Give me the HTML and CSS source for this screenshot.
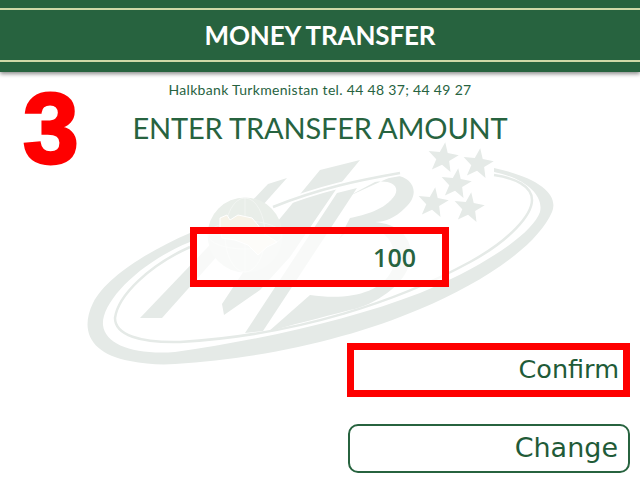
FILE: index.html
```html
<!DOCTYPE html>
<html lang="en">
<head>
<meta charset="utf-8">
<title>Money Transfer</title>
<link rel="stylesheet" href="styles.css">
</head>
<body>
<div class="screen">
  <svg class="watermark" width="640" height="480" viewBox="0 0 640 480" aria-hidden="true">
    <defs>
      <path id="star" d="M0-16L4-5.5L15.2-4.9L6.5 2.1L9.4 12.9L0 6.9L-9.4 12.9L-6.5 2.1L-15.2-4.9L-4-5.5Z"/>
    </defs>
    <g fill="#e5eae7">
      <path d="M190 233C150 250 106 277 93 303C79 332 92 354 130 361C145 364 160 365 175 364C260 359 350 339 420 309C480 284 537 247 552 212C559 195 540 178 494 168L494 172C525 178 544 195 540 212C532 235 480 268 420 293C350 320 260 340 175 352C135 355 105 345 103 325C101 302 140 262 190 242Z"/>
      <path d="M140 318L162 318L287 178L268 184Z"/>
      <path d="M222 304L224 315L260 290L290 257L337 188L360 160L320 170L273 227Z"/>
      <path d="M245 333L263 331L357 188L337 193Z"/>
      <path d="M347 197L395 175C415 178 420 195 405 208C395 218 385 222 375 222C400 224 415 240 410 262C405 285 375 305 350 310C320 318 290 325 268 332L310 295C345 300 380 295 392 270C400 245 385 228 365 228C350 228 340 235 336 245L350 218C365 215 385 210 395 195C400 185 390 180 375 182Z"/>
      <use href="#star" transform="translate(443 158) rotate(8)"/>
      <use href="#star" transform="translate(478 164) rotate(8)"/>
      <use href="#star" transform="translate(456 184) rotate(8)"/>
      <use href="#star" transform="translate(433 203) rotate(8)"/>
      <use href="#star" transform="translate(469 208) rotate(8)"/>
    </g>
    <path d="M190 247C150 265 118 295 115 318C115 335 140 343 180 342C300 335 400 300 470 262C510 240 532 215 532 200C532 186 515 178 494 175" fill="none" stroke="#e5eae7" stroke-width="2.5"/>
    <path d="M273 207C320 188 360 180 400 173" fill="none" stroke="#fff" stroke-width="6"/>
    <path d="M273 207C320 188 360 180 400 173" fill="none" stroke="#e5eae7" stroke-width="2.5"/>
    <circle cx="245" cy="235" r="37.5" fill="#e9eee9"/>
    <g class="globe-grid">
      <ellipse cx="245" cy="235" rx="20" ry="37"/>
      <ellipse cx="245" cy="235" rx="37" ry="14"/>
      <path d="M245 198V272M208 235H282"/>
    </g>
    <path d="M220 218L227 215L230 220L238 215L252 218L258 225L263 233L277 242L267 247L258 255L248 245L235 240L222 238L220 228Z" fill="#f7f3e8" stroke="#fff" stroke-width="1"/>
  </svg>
  <header class="banner">
    <h1 class="banner-title">MONEY TRANSFER</h1>
  </header>
  <main class="content">
    <div class="intro">
      <div class="step">3</div>
      <div class="headings">
        <p class="phone">Halkbank Turkmenistan tel. 44 48 37; 44 49 27</p>
        <h2 class="prompt">ENTER TRANSFER AMOUNT</h2>
      </div>
    </div>
    <div class="amount">100</div>
    <div class="actions">
      <button class="action action-active">Confirm</button>
      <button class="action action-plain">Change</button>
    </div>
  </main>
</div>
</body>
</html>
```
FILE: styles.css
```css
* { box-sizing: border-box; margin: 0; padding: 0; }
html, body { width: 640px; height: 480px; overflow: hidden; background: #fff; }
body { font-family: "Lato", "Liberation Sans", sans-serif; color: #27633f; }
.screen { position: relative; width: 640px; height: 480px; }
.watermark { position: absolute; left: 0; top: 0; }
.globe-grid { fill: none; stroke: #fff; stroke-width: .6; opacity: .7; }
.banner {
  position: relative;
  height: 72px;
  padding-top: 8px;
  background: #27633f;
  box-shadow: 0 2px 4px rgba(0, 0, 0, .45);
}
.banner-title {
  height: 54px;
  border-top: 2px solid #cfd9a8;
  border-bottom: 2px solid #cfd9a8;
  color: #fff;
  font-size: 26px;
  font-weight: 700;
  line-height: 50px;
  letter-spacing: -.15px;
  text-align: center;
}
.content { position: relative; display: flex; flex-direction: column; }
.intro { display: grid; grid-template-columns: 100px 1fr 100px; height: 155px; }
.step {
  margin-top: 6px;
  padding-left: 23px;
  color: #fe0000;
  font-family: "Liberation Sans", sans-serif;
  font-size: 100px;
  font-weight: 700;
  line-height: 100px;
  -webkit-text-stroke: 3px #fe0000;
}
.headings { text-align: center; }
.phone { margin-top: 9px; font-size: 14px; line-height: 18px; letter-spacing: .32px; white-space: nowrap; }
.prompt { margin-top: 11px; font-size: 29px; font-weight: 400; line-height: 36px; letter-spacing: -.16px; white-space: nowrap; }
.amount {
  width: 259px;
  height: 60px;
  margin-left: 190px;
  padding-right: 26px;
  border: 7px solid #fe0000;
  background: rgba(255, 255, 255, .72);
  font-family: "Open Sans", sans-serif;
  font-size: 25px;
  font-weight: 600;
  line-height: 46px;
  text-align: right;
}
.actions { display: flex; flex-direction: column; align-items: flex-end; gap: 27px; margin: 56px 10px 0 0; }
.action {
  display: block;
  background: transparent;
  color: #1f5b38;
  font-family: "DejaVu Sans", sans-serif;
  text-align: right;
}
.action-active { width: 283px; height: 54px; padding: 0 4px 2px 0; border: 7px solid #fe0000; font-size: 25.5px; }
.action-plain { width: 282px; height: 49px; padding: 0 10px 3px 0; border: 2px solid #27633f; border-radius: 10px; font-size: 27px; }
```
